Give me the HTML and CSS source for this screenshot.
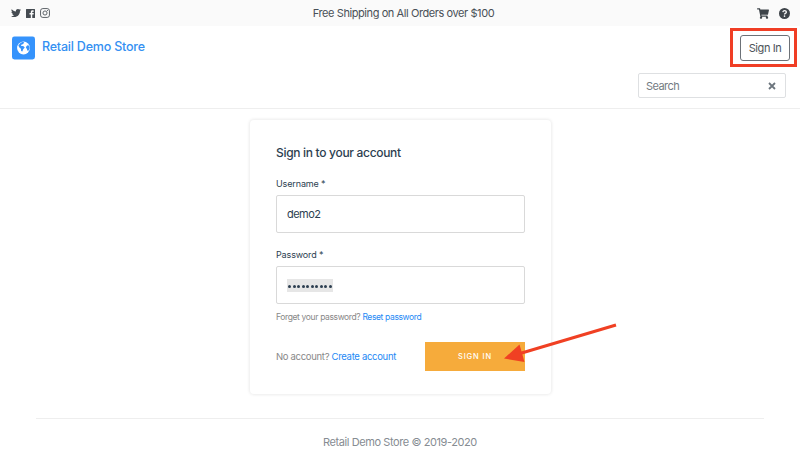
FILE: index.html
```html
<!DOCTYPE html>
<html lang="en">
<head>
<meta charset="utf-8">
<title>Retail Demo Store</title>
<link rel="stylesheet" href="styles.css">
</head>
<body>
<div class="topbar">
  <div class="social">
    <svg class="twitter" viewBox="0 0 512 512"><path d="M459.37 151.716c.325 4.548.325 9.097.325 13.645 0 138.72-105.583 298.558-298.558 298.558-59.452 0-114.68-17.219-161.137-47.106 8.447.974 16.568 1.299 25.34 1.299 49.055 0 94.213-16.568 130.274-44.832-46.132-.975-84.792-31.188-98.112-72.772 6.498.974 12.995 1.624 19.818 1.624 9.421 0 18.843-1.3 27.614-3.573-48.081-9.747-84.143-51.98-84.143-102.985v-1.299c13.969 7.797 30.214 12.67 47.431 13.319-28.264-18.843-46.781-51.005-46.781-87.391 0-19.492 5.197-37.36 14.294-52.954 51.655 63.675 129.3 105.258 216.365 109.807-1.624-7.797-2.599-15.918-2.599-24.04 0-57.828 46.782-104.934 104.934-104.934 30.213 0 57.502 12.67 76.67 33.137 23.715-4.548 46.456-13.32 66.599-25.34-7.798 24.366-24.366 44.833-46.132 57.827 21.117-2.273 41.584-8.122 60.426-16.243-14.292 20.791-32.161 39.308-52.628 54.253z"/></svg>
    <svg class="facebook" viewBox="0 0 18 18"><path d="M1 0h16q1 0 1 1v16q0 1-1 1h-4.500v-7h2.600l.4-2.800h-3V6.600c0-.9.400-1.300 1.400-1.300h1.600V2.800l-2.200-.1c-2.400 0-3.700 1.300-3.700 3.700v1.800H7V11h2.600v7H1q-1 0-1-1V1q0-1 1-1z"/></svg>
    <svg class="instagram" viewBox="0 0 18 18"><rect x="1" y="1" width="16" height="16" rx="4.200"/><circle cx="9" cy="9" r="3.700"/><circle class="lens" cx="13.500" cy="4.500" r="1.100"/></svg>
  </div>
  <div class="promo"><span>Free Shipping on All Orders over $100</span></div>
  <div class="tools">
    <svg class="cart" viewBox="0 0 576 512"><path d="M528.120 301.319l47.273-208C578.806 78.301 567.391 64 551.990 64H159.208l-9.166-44.810C147.758 8.021 137.930 0 126.529 0H24C10.745 0 0 10.745 0 24v16c0 13.255 10.745 24 24 24h69.883l70.248 343.435C147.325 417.100 136 435.222 136 456c0 30.928 25.072 56 56 56s56-25.072 56-56c0-15.674-6.447-29.835-16.824-40h209.647C430.447 426.165 424 440.326 424 456c0 30.928 25.072 56 56 56s56-25.072 56-56c0-22.172-12.888-41.332-31.579-50.405l5.517-24.276c3.413-15.018-8.002-29.319-23.403-29.319H218.117l-6.545-32h293.145c11.206 0 20.920-7.754 23.403-18.681z"/></svg>
    <svg class="help" viewBox="0 0 20 20"><circle cx="10" cy="10" r="10"/><path d="M6.900 7.500C7.400 5.700 8.500 4.900 10.200 4.900c1.900 0 3.100 1.100 3.100 2.600 0 2.200-3.200 2.200-3.200 4.500"/><circle class="dot" cx="10" cy="14.900" r="1.500"/></svg>
  </div>
</div>
<header>
  <div class="main">
    <a class="brand">
      <svg viewBox="0 0 24 24"><rect width="24" height="24" rx="2.500"/><circle cx="12" cy="12" r="6.700"/><path d="M6.600 9.400L9 6.400l2.600-.8 1.200.9-1.600 1.600-1.500.5-.2 1.300h2.200l1.600 1.600-1.600 1.900-.9 2.300-1.300-.5-.2-2.300-1.600-1.500zM15 10.200l1.200-1.100 1.900.6.400 2.500-1.400 2.700-1.300-.3-.2-1.900-1.100-.8z"/></svg>
      <span>Retail Demo Store</span>
    </a>
    <div class="signin-link"><span>Sign In</span></div>
  </div>
  <div class="search"><span>Search</span><svg viewBox="0 0 8 8"><path d="M1 1l6 6M7 1L1 7"/></svg></div>
</header>
<main>
  <section class="card">
    <h1><span>Sign in to your account</span></h1>
    <label><span>Username *</span></label>
    <div class="field"><span class="value">demo2</span></div>
    <label class="second"><span>Password *</span></label>
    <div class="field"><span class="password"><i></i><i></i><i></i><i></i><i></i><i></i><i></i><i></i><i></i><i></i></span></div>
    <p class="hint"><span>Forget your password? <a>Reset password</a></span></p>
    <div class="actions">
      <p><span>No account? <a>Create account</a></span></p>
      <div class="submit"><span>SIGN IN</span></div>
    </div>
  </section>
</main>
<footer><span>Retail Demo Store © 2019-2020</span></footer>
<div class="highlight"></div>
<svg class="arrow" viewBox="0 0 114 42"><path class="shaft" d="M112 3L16 31.500"/><path class="head" d="M0 36.500L15.500 22.500L20.500 40z"/></svg>
</body>
</html>
```
FILE: styles.css
```css
* { box-sizing: border-box; }
body {
  margin: 0;
  width: 800px;
  height: 461px;
  overflow: hidden;
  position: relative;
  background: #fff;
  color: #2c3e50;
  font-family: Inter, "Liberation Sans", sans-serif;
}
span { white-space: nowrap; }
p, h1 { margin: 0; }
svg { display: block; flex: none; }
a { color: #2489f5; }

.topbar {
  display: grid;
  grid-template-columns: 1fr auto 1fr;
  align-items: center;
  height: 26px;
  padding: 0 10px 0 11px;
  background: #fafafa;
  color: #495057;
}
.social, .tools { display: flex; align-items: center; }
.social { gap: 5px; fill: #454b51; }
.twitter { width: 10px; height: 10px; }
.facebook { width: 9px; height: 9px; }
.instagram { width: 10px; height: 10px; fill: none; stroke: #555b61; stroke-width: 1.7; }
.instagram .lens { fill: #555b61; stroke: none; }
.promo { font-size: 11px; letter-spacing: -0.42px; padding-left: 6px; }
.tools { justify-content: flex-end; gap: 10px; fill: #3e444a; }
.cart { width: 12px; height: 11px; }
.help { width: 11px; height: 11px; }
.help path { fill: none; stroke: #fafafa; stroke-width: 2.4; }
.help .dot { fill: #fafafa; }

header { height: 83px; border-bottom: 1px solid #eee; }
.main {
  display: flex;
  justify-content: space-between;
  padding: 9px 10px 0 12px;
}
.brand {
  display: flex;
  align-items: flex-start;
  gap: 7px;
  color: #3490f2;
  font-size: 12.500px;
  font-weight: 500;
  line-height: 23px;
  letter-spacing: -0.21px;
}
.brand svg { width: 23px; height: 24px; margin-top: 1px; fill: #3593fc; }
.brand circle { fill: #fff; }
.signin-link {
  width: 50px;
  height: 26px;
  border: 1px solid #6c7177;
  border-radius: 3px;
  color: #4d5359;
  font-size: 11px;
  line-height: 24px;
  letter-spacing: -0.4px;
  text-align: center;
}
.search {
  display: flex;
  align-items: center;
  justify-content: space-between;
  width: 148px;
  height: 25px;
  margin: 12px 14px 0 auto;
  padding: 0 9px 0 7px;
  border: 1px solid #dee0e2;
  border-radius: 2px;
  color: #747b82;
  font-size: 11px;
  letter-spacing: -0.55px;
}
.search svg { width: 8px; height: 8px; stroke: #6c757d; stroke-width: 1.8; }

.card {
  width: 301px;
  height: 274px;
  margin: 11px 0 0 250px;
  padding: 24px 26px 0;
  border-radius: 4px;
  box-shadow: 0 0 3px 1px rgba(0, 0, 0, 0.08);
}
h1 { font-size: 12px; font-weight: 500; line-height: 17px; letter-spacing: -0.31px; }
label { display: block; height: 12px; margin-top: 16px; font-size: 9px; line-height: 13px; letter-spacing: -0.13px; }
label.second { margin-top: 15px; }
.field {
  display: flex;
  align-items: center;
  height: 38px;
  margin-top: 6px;
  padding-left: 10px;
  border: 1px solid #d9d9d9;
  border-radius: 2px;
  font-size: 11px;
  letter-spacing: -0.55px;
}
.password {
  display: flex;
  align-items: center;
  justify-content: space-evenly;
  width: 46px;
  height: 13px;
  padding-top: 2px;
  background: #e6e6e6;
}
.password i { width: 3px; height: 3px; border-radius: 50%; background: #2c3e50; }
.hint { margin-top: 7px; font-size: 8.500px; line-height: 12px; letter-spacing: -0.38px; word-spacing: 0.1px; color: #888; }
.actions {
  display: flex;
  align-items: center;
  justify-content: space-between;
  margin-top: 19px;
  font-size: 9.500px;
  letter-spacing: -0.31px;
  color: #888;
}
.submit {
  width: 100px;
  height: 29px;
  background: #f6ab3b;
  color: #fff;
  font-size: 7.500px;
  font-weight: 500;
  line-height: 29px;
  letter-spacing: 0.9px;
  text-align: center;
}

footer {
  margin: 24px 36px 0;
  border-top: 1px solid #eee;
  padding-top: 15px;
  color: #868c92;
  font-size: 11px;
  line-height: 17px;
  letter-spacing: -0.42px;
  text-align: center;
}
.highlight {
  position: absolute;
  left: 730px;
  top: 28px;
  width: 67px;
  height: 39px;
  border: 3px solid #f03e25;
}
.arrow { position: absolute; left: 504px; top: 322px; width: 114px; height: 42px; }
.shaft { stroke: #f04023; stroke-width: 3; }
.head { fill: #f04023; }
```
